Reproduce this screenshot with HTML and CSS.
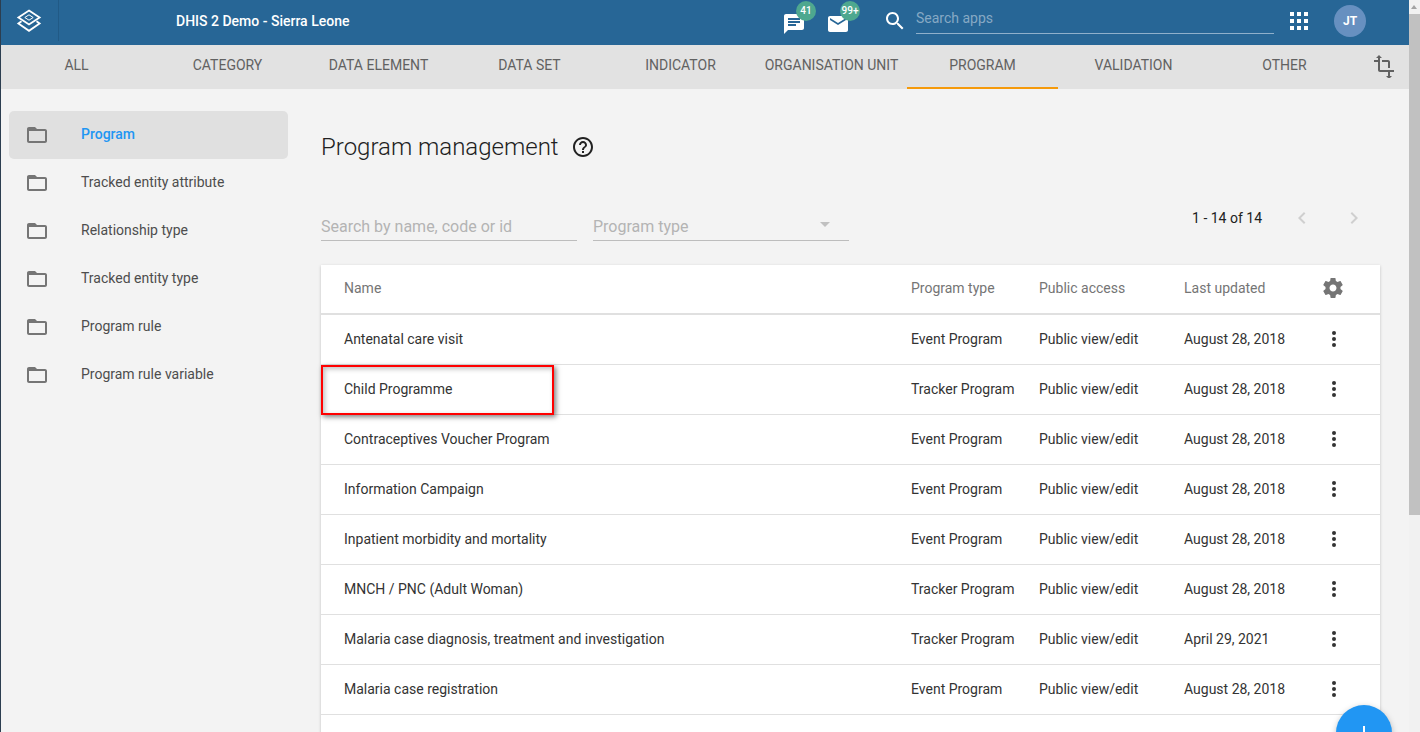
FILE: index.html
```html
<!DOCTYPE html>
<html lang="en">
<head>
    <meta charset="UTF-8">
    <title>Maintenance - Program management</title>
    <link rel="stylesheet" href="styles.css">
</head>
<body>
<div class="app">
    <!-- Header -->
    <header class="topbar">
        <div class="logo">
            <svg width="26" height="26" viewBox="0 0 26 26" fill="none" stroke="#fff" stroke-width="1.800" stroke-linejoin="miter">
                <path d="M13 2.500 L23.600 9.500 L13 16.500 L2.400 9.500 Z"/>
                <path d="M13 6.800 L17.200 9.500 L13 12.200 L8.800 9.500 Z" stroke-width="1"/>
                <path d="M5.500 13.200 L2.400 15.400 L13 22.800 L23.600 15.400 L20.500 13.200"/>
            </svg>
        </div>
        <div class="instance">DHIS 2 Demo - Sierra Leone</div>
        <div class="notif">
            <svg width="24" height="24" viewBox="0 0 24 24" fill="#fff"><path d="M20 2H4c-1.100 0-2 .9-2 2v18l4-4h14c1.100 0 2-.9 2-2V4c0-1.100-.9-2-2-2zM6 9h12v2H6V9zm8 5H6v-2h8v2zm4-6H6V6h12v2z"/></svg>
            <span class="badge">41</span>
        </div>
        <div class="notif notif-mail">
            <svg width="24" height="24" viewBox="0 0 24 24" fill="#fff"><path d="M20 4H4c-1.100 0-2 .9-2 2v12c0 1.100.9 2 2 2h16c1.100 0 2-.9 2-2V6c0-1.100-.9-2-2-2zm0 4l-8 5-8-5V6l8 5 8-5v2z"/></svg>
            <span class="badge">99+</span>
        </div>
        <svg class="search-icon" width="24" height="24" viewBox="0 0 24 24" fill="#fff"><path d="M15.500 14h-.79l-.28-.27C15.410 12.590 16 11.110 16 9.500 16 5.910 13.090 3 9.500 3S3 5.910 3 9.500 5.910 16 9.500 16c1.610 0 3.090-.59 4.230-1.570l.27.28v.79l5 4.990L20.490 19l-4.990-5zm-6 0C7.010 14 5 11.990 5 9.500S7.010 5 9.500 5 14 7.010 14 9.500 11.990 14 9.500 14z"/></svg>
        <div class="app-search">Search apps</div>
        <div class="apps-grid">
            <i></i><i></i><i></i><i></i><i></i><i></i><i></i><i></i><i></i>
        </div>
        <div class="avatar">JT</div>
    </header>

    <!-- Tabs -->
    <nav class="tabs">
        <a class="tab">ALL</a>
        <a class="tab">CATEGORY</a>
        <a class="tab">DATA ELEMENT</a>
        <a class="tab">DATA SET</a>
        <a class="tab">INDICATOR</a>
        <a class="tab">ORGANISATION UNIT</a>
        <a class="tab tab-active">PROGRAM</a>
        <a class="tab">VALIDATION</a>
        <a class="tab">OTHER</a>
        <svg class="crop-icon" width="24" height="24" viewBox="0 0 24 24" fill="#616161"><path d="M22 18v-2H8V4h2L7 1 4 4h2v2H2v2h4v8c0 1.100.9 2 2 2h8v4h-2l3 3 3-3h-2v-4h4zM10 8h6v6h2V8c0-1.100-.9-2-2-2h-6v2z"/></svg>
    </nav>

    <div class="main">
        <!-- Sidebar -->
        <aside class="sidebar">
            <div class="side-item side-active"><svg class="folder" width="24" height="24" viewBox="0 0 24 24" fill="#757575"><path d="M20 6h-8l-2-2H4c-1.100 0-1.990.9-1.990 2L2 18c0 1.100.9 2 2 2h16c1.100 0 2-.9 2-2V8c0-1.100-.9-2-2-2zm0 12H4V8h16v10z"/></svg><span>Program</span></div>
            <div class="side-item"><svg class="folder" width="24" height="24" viewBox="0 0 24 24" fill="#757575"><path d="M20 6h-8l-2-2H4c-1.100 0-1.990.9-1.990 2L2 18c0 1.100.9 2 2 2h16c1.100 0 2-.9 2-2V8c0-1.100-.9-2-2-2zm0 12H4V8h16v10z"/></svg><span>Tracked entity attribute</span></div>
            <div class="side-item"><svg class="folder" width="24" height="24" viewBox="0 0 24 24" fill="#757575"><path d="M20 6h-8l-2-2H4c-1.100 0-1.990.9-1.990 2L2 18c0 1.100.9 2 2 2h16c1.100 0 2-.9 2-2V8c0-1.100-.9-2-2-2zm0 12H4V8h16v10z"/></svg><span>Relationship type</span></div>
            <div class="side-item"><svg class="folder" width="24" height="24" viewBox="0 0 24 24" fill="#757575"><path d="M20 6h-8l-2-2H4c-1.100 0-1.990.9-1.990 2L2 18c0 1.100.9 2 2 2h16c1.100 0 2-.9 2-2V8c0-1.100-.9-2-2-2zm0 12H4V8h16v10z"/></svg><span>Tracked entity type</span></div>
            <div class="side-item"><svg class="folder" width="24" height="24" viewBox="0 0 24 24" fill="#757575"><path d="M20 6h-8l-2-2H4c-1.100 0-1.990.9-1.990 2L2 18c0 1.100.9 2 2 2h16c1.100 0 2-.9 2-2V8c0-1.100-.9-2-2-2zm0 12H4V8h16v10z"/></svg><span>Program rule</span></div>
            <div class="side-item"><svg class="folder" width="24" height="24" viewBox="0 0 24 24" fill="#757575"><path d="M20 6h-8l-2-2H4c-1.100 0-1.990.9-1.990 2L2 18c0 1.100.9 2 2 2h16c1.100 0 2-.9 2-2V8c0-1.100-.9-2-2-2zm0 12H4V8h16v10z"/></svg><span>Program rule variable</span></div>
        </aside>

        <!-- Content -->
        <section class="content">
            <div class="title-row">
                <h1>Program management</h1>
                <svg width="24" height="24" viewBox="0 0 24 24" fill="#212121"><path d="M11 18h2v-2h-2v2zm1-16C6.480 2 2 6.480 2 12s4.480 10 10 10 10-4.480 10-10S17.520 2 12 2zm0 18c-4.410 0-8-3.590-8-8s3.590-8 8-8 8 3.590 8 8-3.590 8-8 8zm0-14c-2.210 0-4 1.790-4 4h2c0-1.100.9-2 2-2s2 .9 2 2c0 2-3 1.750-3 5h2c0-2.250 3-2.500 3-5 0-2.210-1.790-4-4-4z"/></svg>
            </div>

            <div class="filters">
                <div class="field field-search">Search by name, code or id</div>
                <div class="field field-select">Program type<span class="caret"></span></div>
                <div class="pager">
                    <span>1 - 14 of 14</span>
                    <svg class="pager-prev" width="24" height="24" viewBox="0 0 24 24" fill="#cfcfcf"><path d="M15.410 7.410L14 6l-6 6 6 6 1.410-1.410L10.830 12z"/></svg>
                    <svg class="pager-next" width="24" height="24" viewBox="0 0 24 24" fill="#cfcfcf"><path d="M10 6L8.590 7.410 13.170 12l-4.580 4.590L10 18l6-6z"/></svg>
                </div>
            </div>

            <div class="table">
                <div class="row row-head">
                    <div>Name</div><div>Program type</div><div>Public access</div><div>Last updated</div>
                    <svg class="gear" width="24" height="24" viewBox="0 0 24 24" fill="#757575"><path d="M19.430 12.980c.04-.32.07-.64.07-.98s-.03-.66-.07-.98l2.110-1.650c.19-.15.24-.42.12-.64l-2-3.460c-.12-.22-.39-.3-.61-.22l-2.490 1c-.52-.4-1.080-.73-1.690-.98l-.38-2.650C14.460 2.180 14.250 2 14 2h-4c-.25 0-.46.18-.49.42l-.38 2.650c-.61.25-1.170.59-1.690.98l-2.490-1c-.23-.09-.49 0-.61.22l-2 3.460c-.13.22-.07.49.12.64l2.110 1.650c-.04.32-.07.65-.07.98s.03.66.07.98l-2.110 1.650c-.19.15-.24.42-.12.64l2 3.460c.12.22.39.3.61.22l2.490-1c.52.4 1.080.73 1.690.98l.38 2.650c.03.24.24.42.49.42h4c.25 0 .46-.18.49-.42l.38-2.650c.61-.25 1.170-.59 1.690-.98l2.490 1c.23.09.49 0 .61-.22l2-3.460c.12-.22.07-.49-.12-.64l-2.110-1.650zM12 15.500c-1.930 0-3.500-1.570-3.500-3.500s1.570-3.500 3.500-3.500 3.500 1.570 3.500 3.500-1.570 3.500-3.500 3.500z"/></svg>
                </div>
                <div class="row"><div>Antenatal care visit</div><div>Event Program</div><div>Public view/edit</div><div>August 28, 2018</div><div class="dots"><i></i><i></i><i></i></div></div>
                <div class="row row-marked"><div>Child Programme</div><div>Tracker Program</div><div>Public view/edit</div><div>August 28, 2018</div><div class="dots"><i></i><i></i><i></i></div><div class="highlight"></div></div>
                <div class="row"><div>Contraceptives Voucher Program</div><div>Event Program</div><div>Public view/edit</div><div>August 28, 2018</div><div class="dots"><i></i><i></i><i></i></div></div>
                <div class="row"><div>Information Campaign</div><div>Event Program</div><div>Public view/edit</div><div>August 28, 2018</div><div class="dots"><i></i><i></i><i></i></div></div>
                <div class="row"><div>Inpatient morbidity and mortality</div><div>Event Program</div><div>Public view/edit</div><div>August 28, 2018</div><div class="dots"><i></i><i></i><i></i></div></div>
                <div class="row"><div>MNCH / PNC (Adult Woman)</div><div>Tracker Program</div><div>Public view/edit</div><div>August 28, 2018</div><div class="dots"><i></i><i></i><i></i></div></div>
                <div class="row"><div>Malaria case diagnosis, treatment and investigation</div><div>Tracker Program</div><div>Public view/edit</div><div>April 29, 2021</div><div class="dots"><i></i><i></i><i></i></div></div>
                <div class="row"><div>Malaria case registration</div><div>Event Program</div><div>Public view/edit</div><div>August 28, 2018</div><div class="dots"><i></i><i></i><i></i></div></div>
                <div class="row row-last"></div>
            </div>
        </section>
    </div>
</div>

<div class="fab"><span class="fab-plus"></span></div>

<!-- Scrollbar -->
<div class="scrollbar">
    <span class="scroll-up"></span>
    <div class="scroll-thumb"></div>
</div>
</body>
</html>
```

FILE: styles.css
```css
* {
    box-sizing: border-box;
}

html, body {
    margin: 0;
    height: 100%;
    overflow: hidden;
}

body {
    background-color: #f3f3f3;
    font-family: Roboto, "Liberation Sans", sans-serif;
    font-size: 14px;
    color: #333;
    border-left: 1px solid #2c3e50;
}

.app {
    width: 1408px;
}

/* Header */
.topbar {
    display: flex;
    align-items: center;
    height: 45px;
    background-color: #276696;
    color: #fff;
}

.topbar > * {
    flex-shrink: 0;
}

.logo {
    display: flex;
    align-items: center;
    justify-content: center;
    width: 58px;
    height: 41px;
    margin-bottom: 4px;
    padding-right: 2px;
    border-right: 1px solid #215a86;
}

.instance {
    width: 606px;
    margin-left: 117px;
    font-size: 14px;
    font-weight: 500;
    margin-bottom: 3px;
}

.notif {
    position: relative;
    display: flex;
    width: 24px;
    height: 24px;
    margin-top: 3px;
}

.notif-mail {
    margin-left: 20px;
}

.badge {
    position: absolute;
    top: -11px;
    left: 14px;
    width: 20px;
    height: 20px;
    border-radius: 50%;
    background-color: #4ea88f;
    color: #fff;
    font-size: 10px;
    font-weight: 500;
    line-height: 20px;
    text-align: center;
}

.search-icon {
    margin-left: 33px;
    margin-bottom: 4px;
}

.app-search {
    width: 358px;
    height: 30px;
    margin-left: 9px;
    margin-bottom: 7px;
    padding-top: 6px;
    font-size: 14px;
    color: #86a9c4;
    border-bottom: 1px solid #8fb0cb;
}

.apps-grid {
    display: grid;
    grid-template-columns: repeat(3, 4px);
    grid-auto-rows: 4px;
    gap: 3px;
    margin-left: 16px;
    margin-bottom: 3px;
}

.apps-grid i {
    background-color: #fff;
}

.avatar {
    width: 32px;
    height: 32px;
    margin-left: 26px;
    margin-bottom: 3px;
    border-radius: 50%;
    background-color: #6790c0;
    font-size: 12px;
    font-weight: 700;
    line-height: 32px;
    text-align: center;
}

/* Tabs */
.tabs {
    position: relative;
    display: flex;
    height: 44px;
    background-color: #e2e2e2;
}

.tab {
    width: 151px;
    font-size: 14px;
    line-height: 41px;
    text-align: center;
    color: #616161;
    white-space: nowrap;
}

.tab-active {
    border-bottom: 2px solid #f59a0b;
}

.crop-icon {
    margin: 9px 0 0 12px;
}

/* Sidebar */
.main {
    display: flex;
}

.sidebar {
    width: 320px;
    flex-shrink: 0;
    padding: 22px 0 0 8px;
}

.side-item {
    display: flex;
    align-items: center;
    width: 279px;
    height: 48px;
    padding-left: 16px;
    border-radius: 5px;
    font-size: 14px;
    color: #4d4d4d;
}

.side-item span {
    margin-left: 32px;
    margin-bottom: 3px;
}

.side-active {
    background-color: #e0e0e0;
}

.side-active span {
    color: #2196f3;
    font-weight: 500;
}

/* Content */
.content {
    width: 1059px;
}

.title-row {
    display: flex;
    align-items: center;
    gap: 12px;
    height: 36px;
    margin-top: 40px;
}

.title-row h1 {
    margin: 0;
    font-size: 24px;
    font-weight: 300;
    color: #212121;
}

.filters {
    position: relative;
    display: flex;
    gap: 16px;
    height: 52px;
    margin-top: 24px;
    margin-bottom: 24px;
}

.field {
    position: relative;
    width: 256px;
    height: 41px;
    margin-top: 11px;
    padding-top: 17px;
    font-size: 16px;
    color: #b4b4b4;
    border-bottom: 1px solid #bdbdbd;
    white-space: nowrap;
}

.caret {
    position: absolute;
    right: 19px;
    top: 22px;
    border-left: 5px solid transparent;
    border-right: 5px solid transparent;
    border-top: 5px solid #c0c0c0;
}

.pager {
    display: flex;
    align-items: center;
    height: 24px;
    margin-top: 17px;
    margin-left: auto;
    margin-right: 14px;
    color: #212121;
}

.pager-prev {
    margin-left: 28px;
}

.pager-next {
    margin-left: 28px;
}

/* Table */
.table {
    background-color: #fff;
    box-shadow: 0 1px 3px rgba(0, 0, 0, 0.2);
}

.row {
    position: relative;
    display: grid;
    grid-template-columns: 567px 128px 145px 138px 24px;
    align-items: center;
    height: 50px;
    padding-left: 23px;
    padding-bottom: 1px;
    border-bottom: 1px solid #e0e0e0;
    color: #333;
    white-space: nowrap;
}

.row-head {
    color: #757575;
    padding-bottom: 3px;
    border-bottom: 2px solid #e0e0e0;
}

.gear {
    margin-left: -1px;
}

.dots {
    display: flex;
    flex-direction: column;
    align-items: center;
    gap: 2px;
}

.dots i {
    width: 4px;
    height: 4px;
    border-radius: 50%;
    background-color: #333;
}

.highlight {
    position: absolute;
    left: 0;
    top: 0;
    width: 233px;
    height: 50px;
    border: 2px solid #f00;
    box-shadow: 2px 2px 5px rgba(0, 0, 0, 0.5), inset 2px 2px 5px rgba(0, 0, 0, 0.25);
}

/* Add button */
.fab {
    position: fixed;
    left: 1336px;
    top: 705px;
    width: 56px;
    height: 56px;
    border-radius: 50%;
    background-color: #2196f3;
    box-shadow: 0 2px 6px rgba(0, 0, 0, 0.25);
}

.fab-plus {
    position: absolute;
    left: 27px;
    top: 21px;
    width: 2px;
    height: 14px;
    background-color: #fff;
}

/* Scrollbar */
.scrollbar {
    position: fixed;
    top: 0;
    right: 0;
    width: 11px;
    height: 100%;
    background-color: #f1f1f1;
}

.scroll-up {
    position: absolute;
    top: 5px;
    left: 2px;
    border-left: 3px solid transparent;
    border-right: 3px solid transparent;
    border-bottom: 4px solid #a3a3a3;
}

.scroll-thumb {
    position: absolute;
    top: 14px;
    left: 0;
    width: 100%;
    height: 501px;
    background-color: #c1c1c1;
}
```
